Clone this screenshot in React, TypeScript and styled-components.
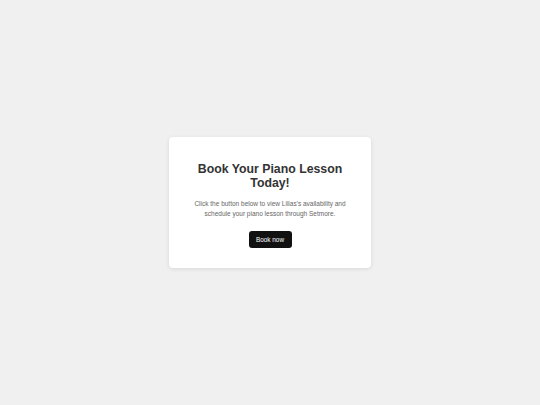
import styled, { createGlobalStyle } from 'styled-components'

const GlobalStyle = createGlobalStyle`
  html, body {
    margin: 0;
    padding: 0;
    background: #f0f0f0;
    font-family: "Liberation Sans", Arial, sans-serif;
  }
`

const Page = styled.div`
  width: 540px;
  height: 405px;
  display: flex;
  align-items: center;
  justify-content: center;
`

const Card = styled.div`
  width: 202px;
  box-sizing: border-box;
  padding: 25px 20px 20px;
  background: #ffffff;
  border-radius: 4px;
  box-shadow: 0 1px 4px rgba(0, 0, 0, 0.1);
  text-align: center;
`

const Title = styled.h1`
  margin: 0;
  font-size: 12.3px;
  line-height: 14px;
  font-weight: 700;
  color: #333333;
`

const Description = styled.p`
  margin: 9px 0 0;
  font-size: 6.5px;
  line-height: 10px;
  color: #666666;
`

const BookButton = styled.button`
  display: block;
  margin: 12px auto 0;
  width: 43px;
  height: 17px;
  padding: 0;
  border: none;
  border-radius: 3px;
  background: #111111;
  color: #ffffff;
  font-family: inherit;
  font-size: 6.4px;
  cursor: pointer;
`

export default function App() {
  return (
    <>
      <GlobalStyle />
      <Page>
        <Card>
          <Title>Book Your Piano Lesson Today!</Title>
          <Description>
            Click the button below to view Lilias's availability and schedule your piano lesson through Setmore.
          </Description>
          <BookButton>Book now</BookButton>
        </Card>
      </Page>
    </>
  )
}
